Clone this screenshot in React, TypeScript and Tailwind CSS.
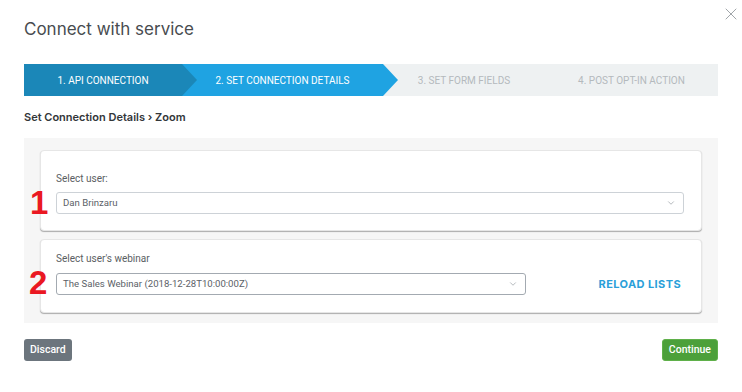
import { ChevronDown, X } from "lucide-react";

const steps = [
  { label: "1. API CONNECTION", w: "w-[158px]", bg: "bg-[#1b87b8]", arrow: "bg-[#1b87b8]", text: "text-white", z: "z-20" },
  { label: "2. SET CONNECTION DETAILS", w: "w-[201px]", bg: "bg-[#1fa3e2]", arrow: "bg-[#1fa3e2]", text: "text-white", z: "z-10" },
  { label: "3. SET FORM FIELDS", w: "w-[162px]", bg: "", arrow: "", text: "text-[#b4b9bd]", z: "" },
  { label: "4. POST OPT-IN ACTION", w: "flex-1", bg: "", arrow: "", text: "text-[#b4b9bd]", z: "" },
];

const roboto = { fontFamily: "Roboto, 'Liberation Sans', sans-serif" };

function Select({ value, className }: { value: string; className: string }) {
  return (
    <div
      className={`flex h-[22px] items-center justify-between rounded-[3px] border bg-white pl-[6px] pr-[7px] text-[9.6px] text-[#5b6167] ${className}`}
      style={roboto}
    >
      <span>{value}</span>
      <ChevronDown size={10} strokeWidth={1.5} className="text-[#8a9096]" />
    </div>
  );
}

export default function App() {
  return (
    <div
      className="relative h-[392px] w-[742px] overflow-hidden bg-white px-6"
      style={{ fontFamily: "Inter, 'Liberation Sans', sans-serif" }}
    >
      <button className="absolute right-[1px] top-[4px] text-[#8d9398]">
        <X size={20} strokeWidth={1} />
      </button>

      <h1 className="mt-[17px] text-[17px] leading-[24px] text-[#484c50]">
        Connect with service
      </h1>

      {/* wizard steps */}
      <div className="mt-[23px] flex h-8 bg-[#eef1f2]" style={roboto}>
        {steps.map((s) => (
          <div
            key={s.label}
            className={`relative flex items-center justify-center text-[10px] ${s.w} ${s.bg} ${s.text} ${s.z}`}
          >
            {s.label}
            {s.arrow && (
              <span
                className={`absolute right-[-15px] top-0 h-8 w-[15px] [clip-path:polygon(0_0,100%_50%,0_100%)] ${s.arrow}`}
              />
            )}
          </div>
        ))}
      </div>

      <div className="mt-[13px] text-[11px] font-semibold leading-4 text-[#333639]">
        Set Connection Details › Zoom
      </div>

      {/* settings panel */}
      <div className="relative mt-[13px] flex flex-col gap-2 bg-[#f6f6f6] px-4 pb-[10px] pt-3">
        <div className="rounded-[4px] border border-[#e6e6e6] bg-white pb-4 pl-[15px] pr-[17px] pt-[21px] shadow-[0_1px_1px_rgba(0,0,0,0.3)]">
          <div className="mb-[6px] text-[10px] leading-[14px] text-[#5a5e62]" style={roboto}>
            Select user:
          </div>
          <Select value="Dan Brinzaru" className="h-[21px] border-[#cdd2d7]" />
        </div>

        <div className="rounded-[4px] border border-[#e6e6e6] bg-white pb-[17px] pl-[15px] pr-5 pt-[12px] shadow-[0_1px_1px_rgba(0,0,0,0.3)]">
          <div className="mb-[7px] text-[10px] leading-[14px] text-[#5a5e62]" style={roboto}>
            Select user's webinar
          </div>
          <div className="flex items-center justify-between">
            <Select
              value="The Sales Webinar (2018-12-28T10:00:00Z)"
              className="w-[470px] border-[#a3aab1]"
            />
            <span className="text-[11px] font-bold tracking-[0.4px] text-[#2a9fd9]">RELOAD LISTS</span>
          </div>
        </div>

        <span
          className="absolute left-[6px] top-[48px] text-[33px] font-bold leading-none text-[#ea1822]"
          style={{ fontFamily: "'Liberation Sans', sans-serif" }}
        >
          1
        </span>
        <span
          className="absolute left-[5px] top-[128px] text-[33px] font-bold leading-none text-[#ea1822]"
          style={{ fontFamily: "'Liberation Sans', sans-serif" }}
        >
          2
        </span>
      </div>

      <div className="mt-4 flex justify-between" style={roboto}>
        <button className="h-[22px] rounded-[3px] bg-[#6c757d] px-[6px] text-[10.5px] font-medium text-white">
          Discard
        </button>
        <button className="h-[22px] rounded-[3px] border border-[#5fb04a] bg-[#4ca03a] px-[6px] text-[10.5px] font-medium text-white">
          Continue
        </button>
      </div>
    </div>
  );
}
